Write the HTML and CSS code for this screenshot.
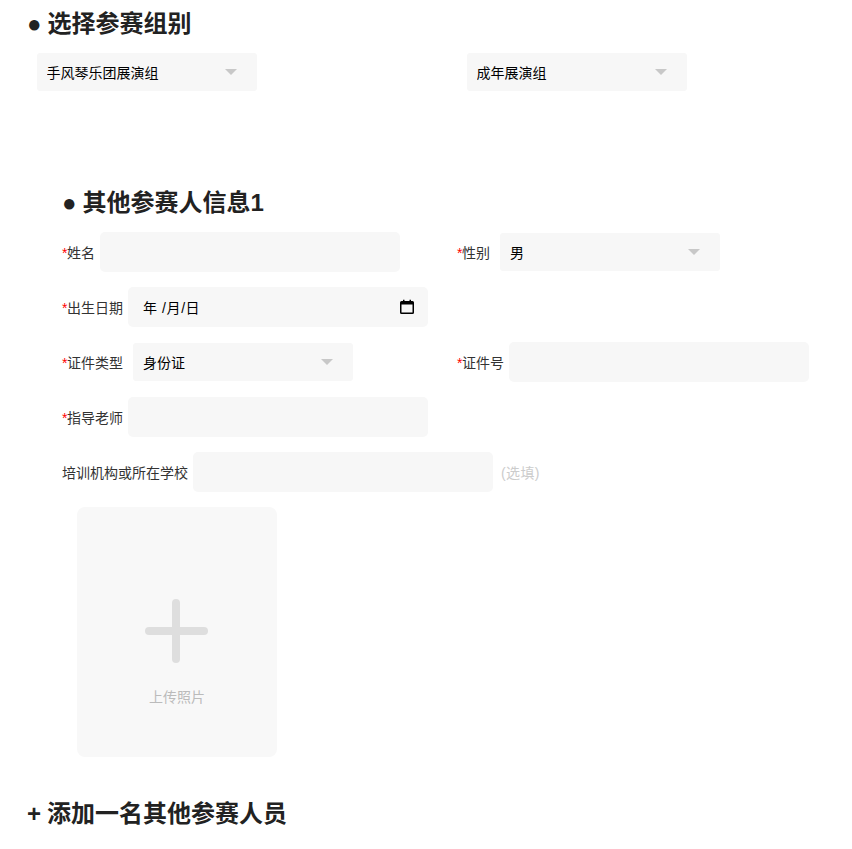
FILE: index.html
```html
<!DOCTYPE html>
<html lang="zh-CN">
<head>
  <meta charset="UTF-8">
  <title>参赛报名</title>
  <link rel="stylesheet" href="styles.css">
</head>
<body>

  <div class="group-section">
    <h2 class="section-title">● 选择参赛组别</h2>
    <div class="group-row">
      <div class="select-box">
        <select><option>手风琴乐团展演组</option></select>
      </div>
      <div class="select-box">
        <select><option>成年展演组</option></select>
      </div>
    </div>
  </div>

  <div class="member-section">
    <h2 class="section-title">● 其他参赛人信息1</h2>

    <div class="form-row">
      <div class="field">
        <label class="is-required"><span class="required">*</span>姓名</label>
        <input type="text" class="text-input">
      </div>
      <div class="field">
        <label class="is-required"><span class="required">*</span>性别</label>
        <div class="select-box select-offset">
          <select><option>男</option></select>
        </div>
      </div>
    </div>

    <div class="form-row">
      <div class="field">
        <label class="is-required"><span class="required">*</span>出生日期</label>
        <div class="date-input">
          <span>年 /月/日</span>
          <svg class="calendar-icon" width="16" height="16" viewBox="0 0 16 16">
            <path d="M1 3.5a1.5 1.5 0 0 1 1.5-1.5H4V.8h1.5V2h5V.8H12V2h1.5A1.5 1.5 0 0 1 15 3.5v10a1.5 1.5 0 0 1-1.5 1.5h-11A1.5 1.5 0 0 1 1 13.5zM2.5 5.5v8h11v-8z"/>
          </svg>
        </div>
      </div>
    </div>

    <div class="form-row">
      <div class="field">
        <label class="is-required"><span class="required">*</span>证件类型</label>
        <div class="select-box select-offset">
          <select><option>身份证</option></select>
        </div>
      </div>
      <div class="field">
        <label class="is-required"><span class="required">*</span>证件号</label>
        <input type="text" class="text-input">
      </div>
    </div>

    <div class="form-row">
      <div class="field">
        <label class="is-required"><span class="required">*</span>指导老师</label>
        <input type="text" class="text-input">
      </div>
    </div>

    <div class="form-row">
      <div class="field field-wide">
        <label>培训机构或所在学校</label>
        <input type="text" class="text-input">
        <span class="optional">(选填)</span>
      </div>
    </div>

    <div class="upload-box">
      <div class="upload-plus"></div>
      <div class="upload-text">上传照片</div>
    </div>
  </div>

  <h2 class="section-title add-member">+ 添加一名其他参赛人员</h2>

</body>
</html>
```

FILE: styles.css
```css
body {
  margin: 0;
  font-family: "Liberation Sans", "Noto Sans CJK SC", sans-serif;
  font-size: 14px;
  color: #333;
  background: #fff;
}

.section-title {
  margin: 0;
  font-size: 24px;
  line-height: 30px;
  font-weight: bold;
  word-spacing: -0.6px;
  color: #222;
}

.group-section {
  padding: 9px 0 0 27px;
}

.group-row {
  display: grid;
  grid-template-columns: 430px 220px;
  margin: 14px 0 0 10px;
}

.select-box {
  position: relative;
  width: 220px;
  height: 38px;
}

.select-box::after {
  content: "";
  position: absolute;
  top: 16px;
  right: 20px;
  border-left: 6px solid transparent;
  border-right: 6px solid transparent;
  border-top: 6px solid #c8c8c8;
}

.select-box select {
  width: 100%;
  height: 100%;
  padding: 2px 9.5px 0;
  border: none;
  border-radius: 3px;
  background: #f7f7f7;
  font-family: inherit;
  font-size: 14px;
  color: #000;
  appearance: none;
}

.select-offset {
  margin-left: 5px;
}

.member-section {
  padding: 97px 0 0 62px;
}

.member-section .section-title {
  margin-bottom: 14px;
}

.form-row {
  display: grid;
  grid-template-columns: 395px 1fr;
  height: 40px;
  margin-bottom: 15px;
}

.field {
  display: flex;
  align-items: center;
  gap: 5px;
}

.field-wide {
  grid-column: 1 / -1;
}

.field label {
  white-space: nowrap;
}

.is-required {
  padding-right: 0.5px;
}

.required {
  margin-right: -0.5px;
  color: #f00;
}

.text-input {
  flex: none;
  width: 300px;
  height: 40px;
  padding: 0 10px;
  box-sizing: border-box;
  border: none;
  border-radius: 5px;
  background: #f7f7f7;
}

.date-input {
  display: flex;
  align-items: center;
  justify-content: space-between;
  width: 300px;
  height: 40px;
  padding: 0 13px 0 14.5px;
  box-sizing: border-box;
  border-radius: 5px;
  background: #f7f7f7;
  letter-spacing: 0.6px;
  color: #000;
}

.optional {
  margin-left: 3px;
  white-space: nowrap;
  letter-spacing: 0.4px;
  color: #ccc;
}

.upload-box {
  display: flex;
  flex-direction: column;
  align-items: center;
  width: 200px;
  height: 250px;
  margin-left: 15px;
  border-radius: 8px;
  background: #f8f8f8;
}

.upload-plus {
  position: relative;
  width: 8px;
  height: 64px;
  margin: 92px 2px 0 0;
  border-radius: 4px;
  background: #dedede;
}

.upload-plus::after {
  content: "";
  position: absolute;
  top: 28px;
  left: -27px;
  width: 63px;
  height: 8px;
  border-radius: 4px;
  background: #dedede;
}

.upload-text {
  margin-top: 24px;
  line-height: 20px;
  color: #bbb;
}

.add-member {
  margin-top: 42px;
  padding-left: 27px;
}
```
